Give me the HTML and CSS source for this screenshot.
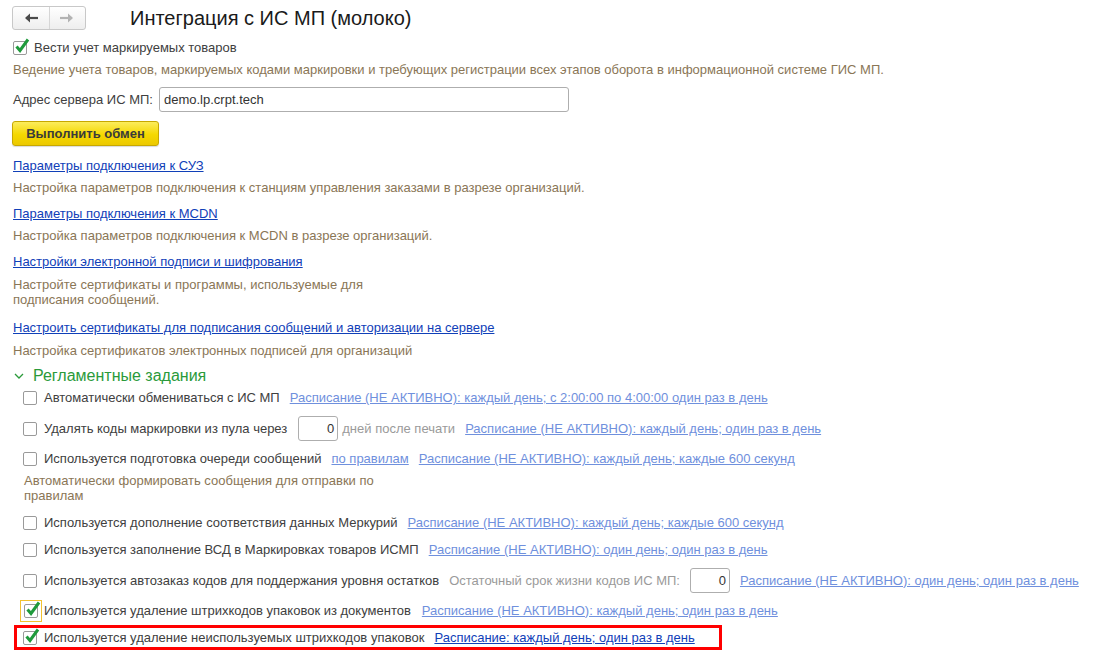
FILE: index.html
```html
<!DOCTYPE html>
<html lang="ru">
<head>
<meta charset="utf-8">
<link rel="stylesheet" href="styles.css">
</head>
<body>
<div class="page">
  <div class="header">
    <div class="nav">
      <span class="nav-btn"><svg width="14" height="10" viewBox="0 0 14 10"><path d="M2 5h12" stroke="#4a4a4a" stroke-width="2.2"/><path d="M6 0.5L1 5l5 4.5z" fill="#4a4a4a"/></svg></span>
      <span class="nav-btn"><svg width="14" height="10" viewBox="0 0 14 10"><path d="M0 5h12" stroke="#b3b3b3" stroke-width="2.2"/><path d="M8 0.5L13 5l-5 4.5z" fill="#b3b3b3"/></svg></span>
    </div>
    <h1 class="title">Интеграция с ИС МП (молоко)</h1>
  </div>

  <div class="check-row top-check">
    <span class="cb checked"><svg width="18" height="18" viewBox="0 0 18 18"><path d="M3.5 8.5l3.5 4 8-11" fill="none" stroke="#1f9a3c" stroke-width="3"/></svg></span>
    <span class="label">Вести учет маркируемых товаров</span>
  </div>
  <div class="desc d-top">Ведение учета товаров, маркируемых кодами маркировки и требующих регистрации всех этапов оборота в информационной системе ГИС МП.</div>

  <div class="field-row">
    <span class="label">Адрес сервера ИС МП:</span>
    <span class="input wide">demo.lp.crpt.tech</span>
  </div>

  <div class="btn">Выполнить обмен</div>

  <a class="link l1">Параметры подключения к СУЗ</a>
  <div class="desc d1">Настройка параметров подключения к станциям управления заказами в разрезе организаций.</div>
  <a class="link l2">Параметры подключения к MCDN</a>
  <div class="desc d1">Настройка параметров подключения к MCDN в разрезе организаций.</div>
  <a class="link l2">Настройки электронной подписи и шифрования</a>
  <div class="desc d2 narrow">Настройте сертификаты и программы, используемые для подписания сообщений.</div>
  <a class="link l3">Настроить сертификаты для подписания сообщений и авторизации на сервере</a>
  <div class="desc d2">Настройка сертификатов электронных подписей для организаций</div>

  <div class="group-head">
    <svg width="10" height="7" viewBox="0 0 10 7"><path d="M1 1l4 4 4-4" fill="none" stroke="#2a9a3a" stroke-width="1.3"/></svg>
    <span>Регламентные задания</span>
  </div>

  <div class="tasks">
    <div class="check-row task r1">
      <span class="cb"></span>
      <span class="label">Автоматически обмениваться с ИС МП</span>
      <a class="link faint">Расписание (НЕ АКТИВНО): каждый день; с 2:00:00 по 4:00:00 один раз в день</a>
    </div>
    <div class="check-row task r2">
      <span class="cb"></span>
      <span class="label">Удалять коды маркировки из пула через</span>
      <span class="input num">0</span>
      <span class="hint">дней после печати</span>
      <a class="link faint gap">Расписание (НЕ АКТИВНО): каждый день; один раз в день</a>
    </div>
    <div class="check-row task r3">
      <span class="cb"></span>
      <span class="label">Используется подготовка очереди сообщений</span>
      <a class="link faint">по правилам</a>
      <a class="link faint">Расписание (НЕ АКТИВНО): каждый день; каждые 600 секунд</a>
    </div>
    <div class="desc task-desc">Автоматически формировать сообщения для отправки по правилам</div>
    <div class="check-row task r4">
      <span class="cb"></span>
      <span class="label">Используется дополнение соответствия данных Меркурий</span>
      <a class="link faint">Расписание (НЕ АКТИВНО): каждый день; каждые 600 секунд</a>
    </div>
    <div class="check-row task r5">
      <span class="cb"></span>
      <span class="label">Используется заполнение ВСД в Маркировках товаров ИСМП</span>
      <a class="link faint">Расписание (НЕ АКТИВНО): один день; один раз в день</a>
    </div>
    <div class="check-row task r6">
      <span class="cb"></span>
      <span class="label">Используется автозаказ кодов для поддержания уровня остатков</span>
      <span class="hint">Остаточный срок жизни кодов ИС МП:</span>
      <span class="input num">0</span>
      <a class="link faint">Расписание (НЕ АКТИВНО): один день; один раз в день</a>
    </div>
    <div class="check-row task r7">
      <span class="focus"><span class="cb checked"><svg width="18" height="18" viewBox="0 0 18 18"><path d="M3.5 8.5l3.5 4 8-11" fill="none" stroke="#1f9a3c" stroke-width="3"/></svg></span></span>
      <span class="label">Используется удаление штрихкодов упаковок из документов</span>
      <a class="link faint">Расписание (НЕ АКТИВНО): каждый день; один раз в день</a>
    </div>
    <div class="check-row task r8">
      <span class="cb checked"><svg width="18" height="18" viewBox="0 0 18 18"><path d="M3.5 8.5l3.5 4 8-11" fill="none" stroke="#1f9a3c" stroke-width="3"/></svg></span>
      <span class="label">Используется удаление неиспользуемых штрихкодов упаковок</span>
      <a class="link active">Расписание: каждый день; один раз в день</a>
    </div>
  </div>
</div>
</body>
</html>
```

FILE: styles.css
```css
* { box-sizing: border-box; }
html, body { margin: 0; padding: 0; background: #fff; }
body {
  font-family: "Liberation Sans", Arial, sans-serif;
  font-size: 13px;
  color: #404040;
  width: 1093px;
  height: 660px;
  overflow: hidden;
}
.page {
  padding: 6px 0 0 13px;
  display: flex;
  flex-direction: column;
  align-items: flex-start;
}
.header {
  display: flex;
  align-items: center;
  height: 24px;
  margin-left: -1px;
}
.nav {
  display: flex;
  width: 74px;
  height: 24px;
  border: 1px solid #c8c8c8;
  border-radius: 3px;
  background: linear-gradient(#ffffff, #eeeeee);
}
.nav-btn {
  flex: 1;
  display: flex;
  align-items: center;
  justify-content: center;
}
.nav-btn + .nav-btn { border-left: 1px solid #d6d6d6; }
.title {
  margin: 0 0 0 44px;
  font-size: 20px;
  font-weight: normal;
  color: #1a1a1a;
  line-height: 24px;
}
.check-row {
  display: flex;
  align-items: center;
  gap: 10px;
  height: 16px;
  white-space: nowrap;
}
.top-check { margin-top: 10px; gap: 7px; }
.cb {
  position: relative;
  width: 14px;
  height: 14px;
  flex: 0 0 14px;
  border: 1px solid #9a9a9a;
  border-radius: 2px;
  background: #fff;
}
.cb svg { position: absolute; left: -1px; top: -4px; }
.label { color: #404040; line-height: 16px; }
.desc {
  color: #8a7656;
  line-height: 16px;
}
.d-top { margin-top: 6px; }
.field-row {
  margin-top: 9px;
  display: flex;
  align-items: center;
  gap: 6px;
  height: 25px;
}
.input {
  height: 25px;
  border: 1px solid #aeaeae;
  border-radius: 3px;
  background: #fff;
  display: flex;
  align-items: center;
  padding: 0 4px;
  color: #333;
}
.wide { width: 410px; }
.btn {
  margin-top: 9px;
  margin-left: -1px;
  width: 147px;
  height: 25px;
  border: 1px solid #c7a800;
  border-radius: 3px;
  background: linear-gradient(#fcec5c, #f5d800 55%, #ecc900);
  font-weight: bold;
  color: #3a3a3a;
  display: flex;
  align-items: center;
  justify-content: center;
  box-shadow: 0 1px 1px rgba(0,0,0,0.15);
}
.link {
  color: #1040b8;
  text-decoration: underline;
  line-height: 16px;
  white-space: nowrap;
}
.l1 { margin-top: 12px; }
.l2 { margin-top: 10px; }
.l3 { margin-top: 13px; }
.d1 { margin-top: 6px; }
.d2 { margin-top: 7px; line-height: 15px; }
.narrow { width: 360px; }
.group-head {
  margin-top: 10px;
  display: flex;
  align-items: center;
  gap: 9px;
  height: 16px;
  color: #2a9a3a;
  font-size: 16px;
  margin-left: 1px;
}
.tasks {
  display: flex;
  flex-direction: column;
  align-items: flex-start;
  margin-left: 10px;
}
.task { margin-top: 10px; }
.r1 { margin-top: 6px; }
.r2 { height: 25px; }
.r2 .input, .r6 .input { width: 40px; justify-content: flex-end; padding-right: 3px; }
.r2 .label { margin-right: 1px; }
.r2 .hint { margin-left: -6px; }
.hint { color: #9a9a9a; }
.r6 { height: 25px; }
.task .cb + .label { margin-left: -3px; }
.faint { color: #6f90dd; }
.task-desc { margin-top: 6px; line-height: 15px; width: 362px; white-space: normal; margin-left: 1px; }
.r4 { margin-top: 12px; }
.r5 { margin-top: 11px; }
.r7 { margin-top: 7px; height: 21px; margin-left: -3px; gap: 11px; }
.r7 .focus + .label { margin-left: -9px; }
.focus {
  width: 22px;
  height: 22px;
  border: 1px solid #f2c230;
  display: flex;
  align-items: center;
  justify-content: center;
}
.r8 {
  margin-top: 4px;
  margin-left: -9px;
  height: 25px;
  width: 708px;
  border: 3px solid #ff0000;
  padding-left: 6px;
}
.active { color: #1040b8; }
```
